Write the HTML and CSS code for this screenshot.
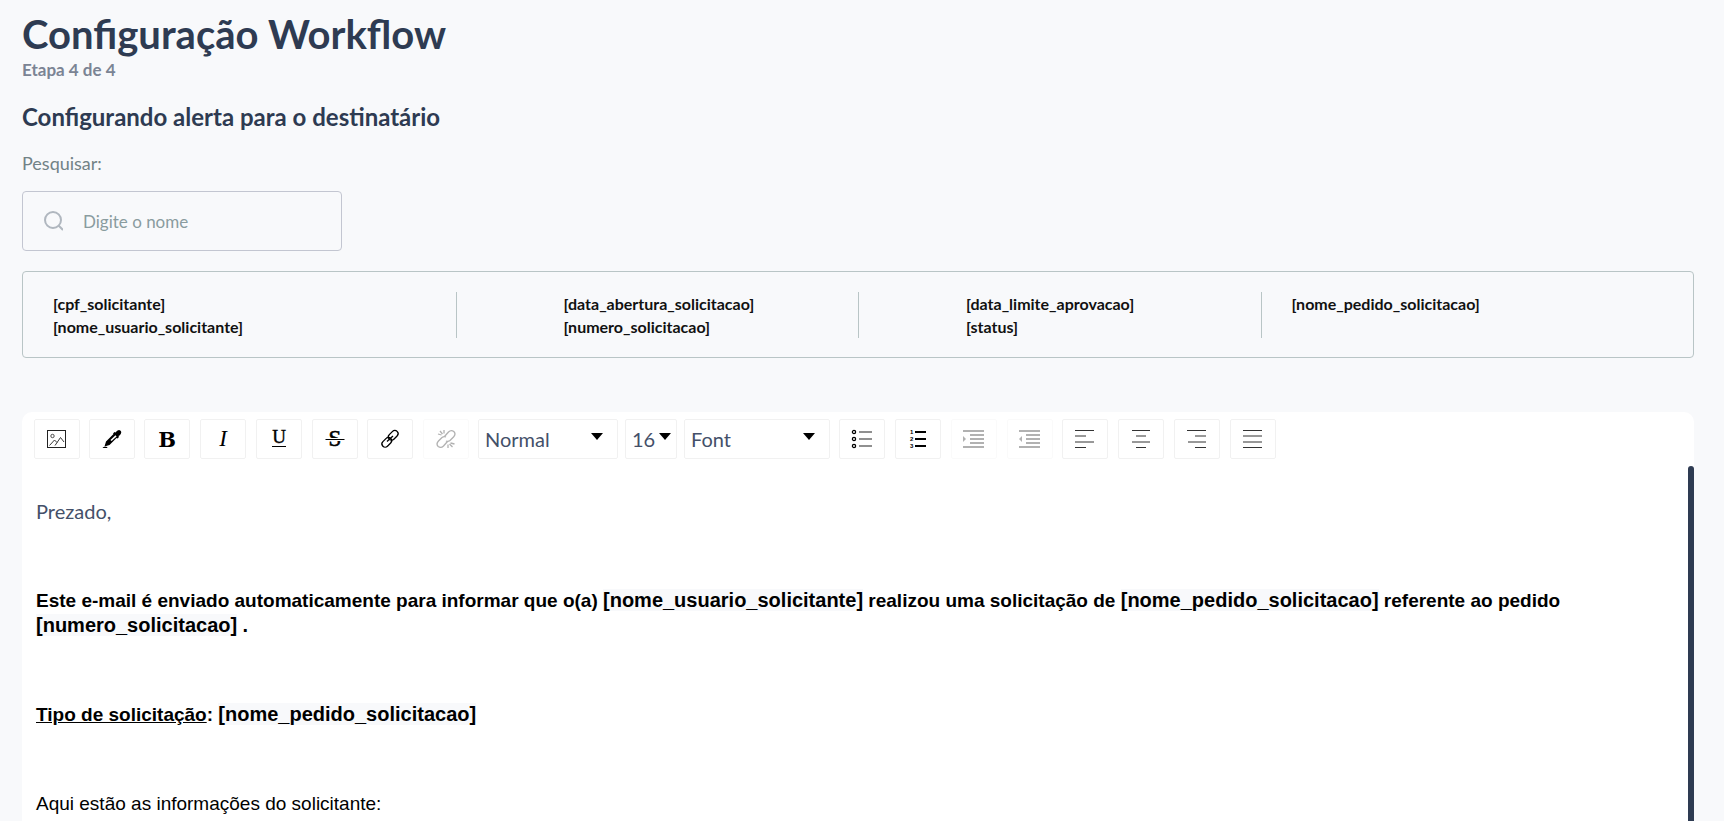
FILE: index.html
```html
<!DOCTYPE html>
<html lang="pt-BR">

<head>
    <meta charset="UTF-8">
    <meta name="viewport" content="width=device-width, initial-scale=1.0">
    <title>Configuração Workflow</title>
    <link rel="stylesheet" href="styles.css">
</head>

<body>
    <header>
        <h1>Configuração Workflow</h1>
        <p class="step">Etapa 4 de 4</p>
    </header>
    <main>
        <h2>Configurando alerta para o destinatário</h2>

        <label class="search-label" for="search">Pesquisar:</label>
        <div class="search-box">
            <svg width="20" height="20" viewBox="0 0 20 20" fill="none" stroke="#b0b7bf" stroke-width="2">
                <circle cx="10" cy="9" r="8" />
                <path d="M15.500 14.500L20 19" />
            </svg>
            <input type="text" id="search" placeholder="Digite o nome">
        </div>

        <div class="tags">
            <ul>
                <li>[cpf_solicitante]</li>
                <li>[nome_usuario_solicitante]</li>
            </ul>
            <ul class="indented">
                <li>[data_abertura_solicitacao]</li>
                <li>[numero_solicitacao]</li>
            </ul>
            <ul class="indented">
                <li>[data_limite_aprovacao]</li>
                <li>[status]</li>
            </ul>
            <ul class="spaced">
                <li>[nome_pedido_solicitacao]</li>
            </ul>
        </div>

        <div class="editor">
            <div class="toolbar">
                <button type="button" aria-label="Imagem">
                    <svg width="20" height="20" viewBox="0 0 20 20" fill="none" stroke="#222">
                        <rect x="0.5" y="1.5" width="18" height="17" />
                        <circle cx="5.5" cy="7" r="1.7" stroke-width="0.8" />
                        <path d="M2.5 16.5L7.5 11L10 13.5M8 16.5L13.5 8.5L17 13" stroke-width="0.9" />
                    </svg>
                </button>
                <button type="button" aria-label="Cor">
                    <svg width="20" height="20" viewBox="0 0 20 20">
                        <path d="M0.5 19Q1.5 17 5.5 18L5 19Z" />
                        <path d="M2.5 17.5L4 12.5L11.5 5L11 4.5L12.5 3L13.5 3.500Q15 1 17 1Q20 1.500 19 4.500Q18 6.500 16.500 7L17 8L15.500 9.500L14.500 9L7.500 16Z" />
                        <path d="M9 11.500L14 6.800" stroke="#fff" stroke-width="1.600" />
                    </svg>
                </button>
                <div class="group">
                    <button type="button" aria-label="Negrito">
                        <svg width="20" height="20" viewBox="0 0 20 20">
                            <text class="letter bold" x="10" y="18" text-anchor="middle">B</text>
                        </svg>
                    </button>
                    <button type="button" aria-label="Itálico">
                        <svg width="20" height="20" viewBox="0 0 20 20">
                            <text class="letter italic" x="10" y="17" text-anchor="middle">I</text>
                        </svg>
                    </button>
                    <button type="button" aria-label="Sublinhado">
                        <svg width="20" height="20" viewBox="0 0 20 20">
                            <text class="letter underline" x="10" y="14" text-anchor="middle">U</text>
                            <path d="M3 17.500H17" stroke="#000" />
                        </svg>
                    </button>
                    <button type="button" aria-label="Tachado">
                        <svg width="20" height="20" viewBox="0 0 20 20">
                            <text class="letter strike" x="10" y="17" text-anchor="middle">S</text>
                            <path d="M0 9H20V12H0Z" fill="#fff" />
                            <path d="M0.500 10.500H19.500" stroke="#000" />
                        </svg>
                    </button>
                </div>
                <div class="group">
                    <button type="button" aria-label="Link">
                        <svg width="20" height="20" viewBox="0 0 20 20" fill="none" stroke="#000" stroke-width="1.300">
                            <rect x="-5.500" y="-3.200" width="11" height="6.400" rx="3.200" transform="translate(13.200 6.300) rotate(-45)" />
                            <rect x="-5.500" y="-3.200" width="11" height="6.400" rx="3.200" transform="translate(6.800 13.300) rotate(-45)" />
                            <path d="M7 12.500L13 7" />
                        </svg>
                    </button>
                    <button type="button" aria-label="Remover link" disabled>
                        <svg width="20" height="20" viewBox="0 0 20 20" fill="none" stroke="#000" stroke-width="1.300">
                            <path d="M8.500 7.500L12.500 3Q15 0.500 17.800 2.500Q20.300 5 17.500 8L14 11.500Q12 13 10 12" />
                            <path d="M11.500 12.500L7.500 17Q5 19.500 2.200 17.500Q-0.300 15 2.500 12L6 8.500Q8 7 10 8" />
                            <path d="M2 5L5.500 6M4 2L6.500 5M8 1V4.500M18.500 15L14.500 14M16.500 18L13.500 15M12 19V15.500" />
                        </svg>
                    </button>
                </div>
                <div class="selects">
                    <div class="dropdown block-type">
                        <select aria-label="Estilo">
                            <option>Normal</option>
                        </select>
                    </div>
                    <div class="dropdown font-size">
                        <select aria-label="Tamanho">
                            <option>16</option>
                        </select>
                    </div>
                    <div class="dropdown font-family">
                        <select aria-label="Fonte">
                            <option>Font</option>
                        </select>
                    </div>
                </div>
                <div class="group">
                    <button type="button" aria-label="Lista">
                        <svg width="20" height="20" viewBox="0 0 20 20" fill="none" stroke="#000">
                            <circle cx="2" cy="3" r="1.600" stroke-width="1.300" />
                            <circle cx="2" cy="10" r="1.600" stroke-width="1.300" />
                            <circle cx="2" cy="17" r="1.600" stroke-width="1.300" />
                            <path d="M7 3H20M7 10H20M7 17H20" stroke="#222" stroke-width="1.200" />
                        </svg>
                    </button>
                    <button type="button" aria-label="Lista numerada">
                        <svg width="20" height="20" viewBox="0 0 20 20">
                            <text class="digit" x="2" y="5">1</text>
                            <text class="digit" x="2" y="12">2</text>
                            <text class="digit" x="2" y="19">3</text>
                            <path d="M7 3H18M7 10H18M7 17H18" stroke="#000" stroke-width="2" />
                        </svg>
                    </button>
                    <button type="button" aria-label="Aumentar recuo" disabled>
                        <svg width="22" height="20" viewBox="0 0 22 20">
                            <path d="M0 2H21M7 6H21M7 10H21M7 14H21M0 18H21" stroke="#000" stroke-width="2" />
                            <path d="M0 7L3 10L0 13Z" />
                        </svg>
                    </button>
                    <button type="button" aria-label="Diminuir recuo" disabled>
                        <svg width="22" height="20" viewBox="0 0 22 20">
                            <path d="M0 2H21M7 6H21M7 10H21M7 14H21M0 18H21" stroke="#000" stroke-width="2" />
                            <path d="M3 7L0 10L3 13Z" />
                        </svg>
                    </button>
                </div>
                <div class="group">
                    <button type="button" aria-label="Alinhar à esquerda">
                        <svg width="20" height="20" viewBox="0 0 20 20" stroke="#333">
                            <path d="M0 1.500H19M0 7H11M0 13H19M0 18.500H11" />
                        </svg>
                    </button>
                    <button type="button" aria-label="Centralizar">
                        <svg width="20" height="20" viewBox="0 0 20 20" stroke="#333">
                            <path d="M1 1.500H19M5 7H15M1 13H19M5 18.500H15" />
                        </svg>
                    </button>
                    <button type="button" aria-label="Alinhar à direita">
                        <svg width="20" height="20" viewBox="0 0 20 20" stroke="#333">
                            <path d="M0 1.500H19M8 7H19M1 13H19M8 18.500H19" />
                        </svg>
                    </button>
                    <button type="button" aria-label="Justificar">
                        <svg width="20" height="20" viewBox="0 0 20 20" stroke="#333">
                            <path d="M0 1.500H19M0 7H19M0 13H19M0 18.500H19" />
                        </svg>
                    </button>
                </div>
            </div>

            <div class="editor-body">
                <div class="content">
                    <p class="greeting">Prezado,</p>
                    <p><strong>Este e-mail é enviado automaticamente para informar que o(a) <span class="tag">[nome_usuario_solicitante]</span> realizou uma solicitação de <span class="tag">[nome_pedido_solicitacao]</span> referente ao pedido <span class="tag">[numero_solicitacao]</span> <span class="dot">.</span></strong></p>
                    <p><strong><u>Tipo de solicitação</u>: <span class="tag">[nome_pedido_solicitacao]</span></strong></p>
                    <p>Aqui estão as informações do solicitante:</p>
                </div>
                <div class="scroll-thumb"></div>
            </div>
        </div>
    </main>
</body>

</html>
```

FILE: styles.css
```css
* {
    box-sizing: border-box;
}

body {
    font-family: Lato, sans-serif;
    background-color: #f8f9fb;
    color: #2e3b52;
    margin: 0;
    padding: 10px 30px 0 22px;
    height: 100vh;
    display: flex;
    flex-direction: column;
    overflow: hidden;
}

h1,
h2,
p,
ul {
    margin: 0;
    padding: 0;
}

h1 {
    font-size: 40px;
    line-height: 48px;
}

.step {
    font-size: 17px;
    font-weight: bold;
    line-height: 24px;
    color: #7b8494;
}

main {
    flex: 1;
    min-height: 0;
    display: flex;
    flex-direction: column;
}

h2 {
    font-size: 24px;
    line-height: 28px;
    margin-top: 21px;
}

.search-label {
    font-size: 18px;
    line-height: 24px;
    margin-top: 20px;
    color: #728286;
}

.search-box {
    display: flex;
    align-items: center;
    gap: 20px;
    width: 320px;
    height: 60px;
    margin-top: 16px;
    padding: 0 20px;
    border: 1px solid #c3c6d1;
    border-radius: 4px;
}

.search-box input {
    flex: 1;
    min-width: 0;
    padding: 0;
    border: none;
    outline: none;
    background: none;
    font-family: inherit;
    font-size: 17px;
    color: #2e3b52;
}

.search-box input::placeholder {
    color: #8a9c9f;
}

.tags {
    display: grid;
    grid-template-columns: repeat(4, 1fr);
    margin-top: 20px;
    padding: 20px 30px 19px;
    border: 1px solid #b9c5c6;
    border-radius: 4px;
}

.tags ul {
    list-style: none;
    font-size: 16px;
    font-weight: bold;
    line-height: 23px;
    color: #111;
}

.tags .indented,
.tags .spaced {
    border-left: 1px solid #b9c5c6;
}

.tags .indented {
    padding-left: 107px;
}

.tags .spaced {
    padding-left: 30px;
}

.editor {
    flex: 1;
    min-height: 0;
    display: flex;
    flex-direction: column;
    margin-top: 54px;
    background-color: #fff;
    border-radius: 10px 10px 0 0;
    overflow: hidden;
}

.toolbar {
    display: flex;
    gap: 9px;
    padding: 7px 12px;
}

.toolbar svg {
    overflow: visible;
}

.group {
    display: flex;
    gap: 10px;
}

.selects {
    display: flex;
    gap: 7px;
}

.toolbar button {
    display: flex;
    align-items: center;
    justify-content: center;
    width: 46px;
    height: 40px;
    padding: 0;
    border: 1px solid #f1f1f1;
    border-radius: 2px;
    background-color: #fff;
    cursor: pointer;
}

.toolbar button:disabled {
    opacity: 0.3;
    cursor: default;
}

.letter {
    font-family: "Liberation Serif", serif;
    font-size: 23px;
}

.letter.bold {
    font-family: "DejaVu Serif", serif;
    font-size: 21px;
    font-weight: bold;
}

.letter.italic {
    font-style: italic;
}

.letter.underline {
    font-size: 19px;
    stroke: #000;
    stroke-width: 0.4px;
}

.letter.strike {
    stroke: #000;
    stroke-width: 0.6px;
}

.digit {
    font-family: "Liberation Sans", sans-serif;
    font-size: 6px;
    font-weight: bold;
}

.dropdown {
    position: relative;
    height: 40px;
}

.dropdown::after {
    content: "";
    position: absolute;
    top: 14px;
    right: 15px;
    border-left: 6px solid transparent;
    border-right: 6px solid transparent;
    border-top: 7px solid #000;
    pointer-events: none;
}

.dropdown select {
    appearance: none;
    width: 100%;
    height: 100%;
    padding: 0 6px;
    border: 1px solid #f1f1f1;
    border-radius: 2px;
    background-color: #fff;
    font-family: inherit;
    font-size: 20px;
    color: #445069;
}

.block-type {
    width: 140px;
}

.font-size {
    width: 52px;
}

.font-size::after {
    right: 6px;
}

.font-family {
    width: 146px;
}

.editor-body {
    flex: 1;
    min-height: 0;
    display: flex;
}

.content {
    flex: 1;
    padding: 33px 14px 0;
    font-family: "Liberation Sans", Arial, sans-serif;
    font-size: 19px;
    line-height: 25px;
    color: #000;
}

.content p {
    margin-bottom: 64px;
}

.content .greeting {
    font-family: Lato, sans-serif;
    font-size: 20px;
    color: #445069;
}

.tag,
.dot {
    font-size: 20px;
}

.tag {
    background-color: #f8f9fb;
}

.scroll-thumb {
    width: 6px;
    background-color: #2e3b52;
    border-radius: 3px 3px 0 0;
}
```
